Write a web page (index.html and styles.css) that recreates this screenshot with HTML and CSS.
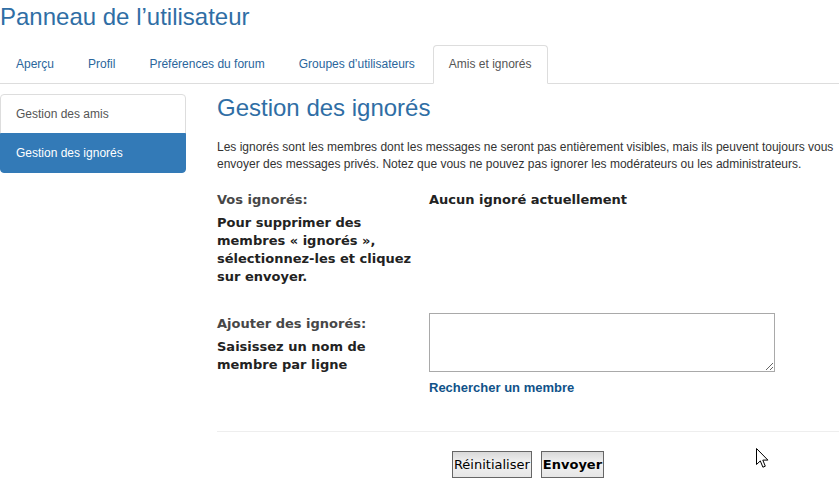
FILE: index.html
```html
<!DOCTYPE html>
<html lang="fr">
<head>
<meta charset="utf-8">
<title>Panneau de l’utilisateur</title>
<link rel="stylesheet" href="styles.css">
</head>
<body>
<h2 class="page-title">Panneau de l’utilisateur</h2>

<ul class="tabs">
  <li class="tab"><a href="#">Aperçu</a></li>
  <li class="tab"><a href="#">Profil</a></li>
  <li class="tab"><a href="#">Préférences du forum</a></li>
  <li class="tab"><a href="#">Groupes d’utilisateurs</a></li>
  <li class="tab active"><a href="#">Amis et ignorés</a></li>
</ul>

<div class="layout">
  <nav class="side-menu">
    <a class="side-item" href="#">Gestion des amis</a>
    <a class="side-item active" href="#">Gestion des ignorés</a>
  </nav>

  <main class="content">
    <h2 class="section-title">Gestion des ignorés</h2>
    <p class="intro">Les ignorés sont les membres dont les messages ne seront pas entièrement visibles, mais ils peuvent toujours vous envoyer des messages privés. Notez que vous ne pouvez pas ignorer les modérateurs ou les administrateurs.</p>

    <form class="foe-form">
      <dl class="field field-list">
        <dt class="field-label">
          <span class="label">Vos ignorés:</span>
          <span class="explain">Pour supprimer des membres « ignorés », sélectionnez-les et cliquez sur envoyer.</span>
        </dt>
        <dd class="field-value"><strong>Aucun ignoré actuellement</strong></dd>
      </dl>

      <dl class="field">
        <dt class="field-label">
          <span class="label">Ajouter des ignorés:</span>
          <span class="explain">Saisissez un nom de membre par ligne</span>
        </dt>
        <dd class="field-value">
          <textarea class="names"></textarea>
          <a class="search-link" href="#">Rechercher un membre</a>
        </dd>
      </dl>

      <div class="actions">
        <button type="reset" class="btn">Réinitialiser</button>
        <button type="submit" class="btn btn-primary">Envoyer</button>
      </div>
    </form>
  </main>
</div>

<svg class="pointer" width="13" height="21" viewBox="0 0 13 21" aria-hidden="true">
  <path d="M0.5 0.5 L0.5 16.5 L4.3 12.9 L6.9 19.2 L9.3 18.2 L6.8 12.1 L11.9 12.1 Z" fill="#fff" stroke="#000" stroke-width="1" stroke-linejoin="miter"/>
</svg>
</body>
</html>
```

FILE: styles.css
```css
html, body {
  margin: 0;
  padding: 0;
  background: #fff;
}

body {
  font-family: "Liberation Sans", Arial, sans-serif;
  font-size: 12px;
  color: #333;
  position: relative;
  min-height: 489px;
  overflow: hidden;
}

a {
  text-decoration: none;
}

.page-title {
  margin: 0;
  padding-top: 3px;
  font-size: 24px;
  font-weight: normal;
  line-height: 28px;
  color: #2f6ea5;
}

/* Top tabs */
.tabs {
  list-style: none;
  margin: 14px 0 0;
  padding: 0;
  display: flex;
  border-bottom: 1px solid #ddd;
}

.tab {
  margin-right: 2px;
  margin-bottom: -1px;
}

.tab a {
  display: block;
  padding: 10px 15px;
  line-height: 17px;
  color: #2a669c;
  border: 1px solid transparent;
  border-radius: 4px 4px 0 0;
}

.tab.active a {
  color: #555;
  background: #fff;
  border-color: #ddd #ddd transparent;
}

/* Sidebar + main column */
.layout {
  display: flex;
  align-items: flex-start;
  padding-top: 10px;
}

.side-menu {
  width: 186px;
  flex: none;
  display: flex;
  flex-direction: column;
}

.side-item {
  display: block;
  padding: 10px 15px;
  line-height: 18px;
  color: #555;
  background: #fff;
  border: 1px solid #ddd;
}

.side-item:first-child {
  border-radius: 4px 4px 0 0;
}

.side-item:last-child {
  border-radius: 0 0 4px 4px;
  margin-top: -1px;
}

.side-item.active {
  color: #fff;
  background: #337ab7;
  border-color: #337ab7;
}

.content {
  flex: 1;
  margin-left: 31px;
}

.section-title {
  margin: 0;
  font-size: 24px;
  font-weight: normal;
  line-height: 28px;
  color: #2f6ea5;
}

.intro {
  margin: 17px 4px 0 0;
  font-size: 12px;
  line-height: 17px;
  color: #333;
}

/* Form rows */
.foe-form {
  font-family: "DejaVu Sans", Verdana, sans-serif;
  font-size: 13px;
}

.field {
  display: flex;
  margin: 0;
}

.field-list {
  margin-top: 18px;
  min-height: 124px;
}

.field-label {
  width: 205px;
  margin-right: 7px;
  flex: none;
}

.label,
.explain {
  display: block;
  font-weight: bold;
  line-height: 18px;
}

.label {
  color: #474747;
}

.explain {
  margin-top: 5px;
  color: #222;
}

.field-value {
  margin: 0;
  line-height: 18px;
  color: #222;
  display: flex;
  flex-direction: column;
  align-items: flex-start;
}

.names {
  width: 346px;
  height: 59px;
  box-sizing: border-box;
  margin: -2px 0 0;
  border: 1px solid #a9a9a9;
  resize: vertical;
  font: inherit;
}

.search-link {
  margin-top: 7px;
  font-family: "Liberation Sans", Arial, sans-serif;
  font-size: 13px;
  font-weight: bold;
  color: #105289;
  line-height: 18px;
}

.actions {
  margin-top: 34px;
  border-top: 1px solid #eee;
  padding-top: 19px;
  display: flex;
  justify-content: center;
  gap: 9px;
}

.btn {
  height: 27px;
  padding: 0 1px;
  font-family: "DejaVu Sans", Verdana, sans-serif;
  font-size: 13px;
  color: #000;
  border: 1px solid #666;
  border-radius: 0;
  background: linear-gradient(#d9d9d9, #f2f2f2 45%, #e6e6e6);
}

.btn-primary {
  font-weight: bold;
}

/* Mouse pointer resting over the page */
.pointer {
  position: absolute;
  left: 756px;
  top: 448px;
}
```
